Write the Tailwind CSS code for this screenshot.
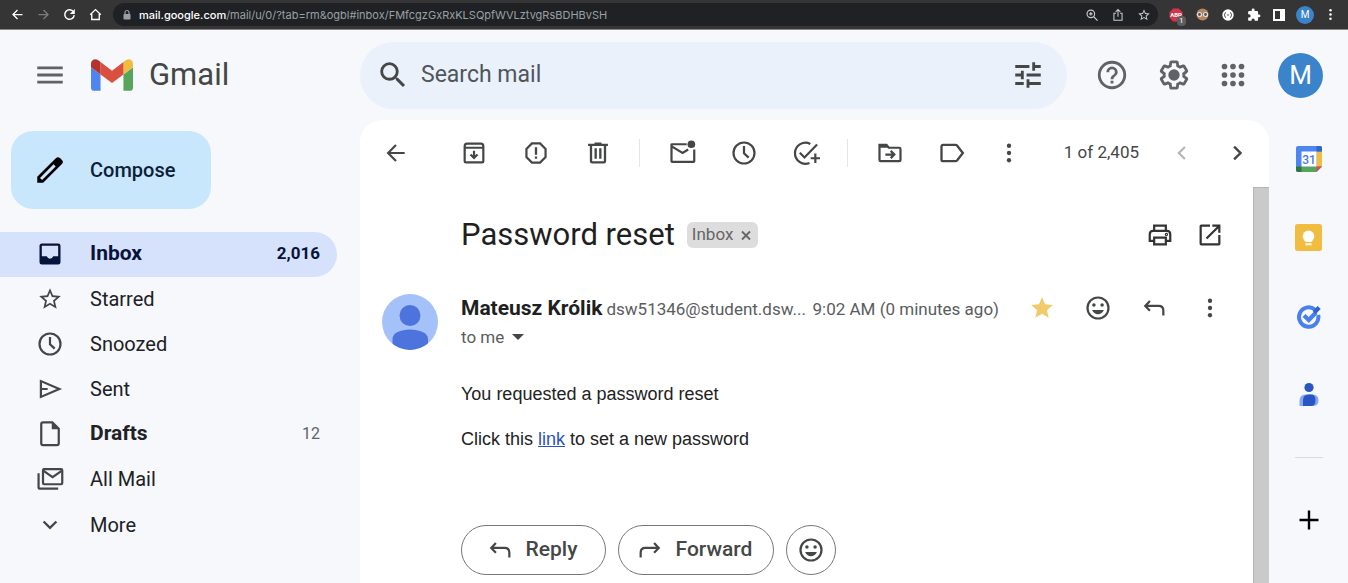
<!DOCTYPE html>
<html lang="en">
<head>
<meta charset="utf-8">
<meta name="viewport" content="width=device-width, initial-scale=1">
<title>Password reset - Gmail</title>
<script src="https://cdn.jsdelivr.net/npm/@tailwindcss/browser@4"></script>
</head>
<body class="flex min-h-screen flex-col bg-[#f6f8fc] font-[Roboto,sans-serif] text-[#1f1f1f]">

<!-- Shared icons -->
<svg class="hidden" aria-hidden="true">
  <symbol id="i-clock" viewBox="0 0 24 24"><circle cx="12" cy="12" r="9" fill="none" stroke="currentColor" stroke-width="1.900"/><path d="M12 6v6.200l4 3.800" fill="none" stroke="currentColor" stroke-width="1.900"/></symbol>
  <symbol id="i-dots" viewBox="0 0 24 24"><circle cx="12" cy="5.300" r="2" fill="currentColor"/><circle cx="12" cy="12" r="2" fill="currentColor"/><circle cx="12" cy="18.700" r="2" fill="currentColor"/></symbol>
  <symbol id="i-reply" viewBox="0 0 24 24"><path d="M8.500 6 4.500 10.200l4 4.200M4.500 10.200H16q4 0 4 4V18.500" fill="none" stroke="currentColor" stroke-width="1.900"/></symbol>
  <symbol id="i-smile" viewBox="0 0 24 24"><circle cx="12" cy="12" r="9" fill="none" stroke="currentColor" stroke-width="1.900"/><circle cx="8.500" cy="9.500" r="1.500" fill="currentColor"/><circle cx="15.500" cy="9.500" r="1.500" fill="currentColor"/><path d="M7 13.700h10c-.8 2.200-2.700 3.600-5 3.600s-4.200-1.400-5-3.600z" fill="currentColor"/></symbol>
  <symbol id="i-star" viewBox="0 0 24 24"><path d="m22 9.240-7.190-.62L12 2 9.190 8.630 2 9.240l5.460 4.730L5.820 21 12 17.270 18.180 21l-1.630-7.030L22 9.240zM12 15.400l-3.760 2.270 1-4.280-3.320-2.880 4.380-.38L12 6.100l1.710 4.040 4.380.38-3.320 2.880 1 4.280L12 15.400z" fill="currentColor"/></symbol>
  <symbol id="i-back" viewBox="0 0 24 24"><path d="M12 4.700 4.700 12l7.300 7.300M4.700 12H20" fill="none" stroke="currentColor" stroke-width="2"/></symbol>
</svg>

<!-- Browser toolbar -->
<div class="flex h-[30px] shrink-0 items-center border-b border-[#8a8486] bg-[#353535] pl-1 pr-[5px] text-white">
  <nav class="flex w-[109px] items-center" aria-label="Browser navigation">
    <button aria-label="Back" class="flex w-[26px] justify-center"><svg class="size-[15px]"><use href="#i-back"/></svg></button>
    <button aria-label="Forward" class="flex w-[26px] justify-center text-[#7d7e80]"><svg class="size-[15px] rotate-180"><use href="#i-back"/></svg></button>
    <button aria-label="Reload" class="flex w-[26px] justify-center"><svg class="size-[15px]" viewBox="0 0 24 24"><path d="M18.400 7.800A7.600 7.600 0 1 0 19.600 13" fill="none" stroke="currentColor" stroke-width="2.400"/><path d="M20.500 3v8h-8z" fill="currentColor"/></svg></button>
    <button aria-label="Home" class="flex w-[26px] justify-center"><svg class="size-[15px]" viewBox="0 0 24 24" fill="none" stroke="currentColor" stroke-width="2.200"><path d="M3.500 12.500 12 4.200l8.500 8.300M6 11v9h12v-9"/></svg></button>
  </nav>
  <div class="flex h-[23px] min-w-0 flex-1 items-center rounded-full bg-[#202124] pl-2 pr-px">
    <svg class="mr-[6px] size-3 shrink-0 text-[#9aa0a6]" viewBox="0 0 24 24"><rect x="5" y="10" width="14" height="11" rx="1.500" fill="currentColor"/><path d="M8 11V7a4 4 0 0 1 8 0v4" fill="none" stroke="currentColor" stroke-width="2.400"/></svg>
    <p class="min-w-0 flex-1 truncate font-[Inter,sans-serif] text-[11px] leading-4 text-[#9aa0a6]"><span class="font-medium text-white">mail.google.com</span>/mail/u/0/?tab=rm&amp;ogbl#inbox/FMfcgzGxRxKLSQpfWVLztvgRsBDHBvSH</p>
    <div class="flex text-[#c8cacc]">
      <button aria-label="Zoom" class="flex w-[26px] justify-center"><svg class="size-[14px]" viewBox="0 0 24 24" fill="none" stroke="currentColor" stroke-width="2"><circle cx="10" cy="10" r="6.500"/><path d="m15 15 6.500 6.500M10 7v6M7 10h6"/></svg></button>
      <button aria-label="Share" class="flex w-[26px] justify-center"><svg class="size-[14px]" viewBox="0 0 24 24" fill="none" stroke="currentColor" stroke-width="1.800"><path d="M8.500 9H5v12h14V9h-3.500M12 15V3M8 6.500 12 2.700l4 3.800"/></svg></button>
      <button aria-label="Bookmark" class="flex w-[26px] justify-center"><svg class="size-[14px]"><use href="#i-star"/></svg></button>
    </div>
  </div>
  <div class="flex items-center pl-[5px]">
    <button aria-label="ABP" class="relative flex w-[26px] justify-center"><svg class="size-[14px]" viewBox="0 0 14 14"><path d="M4.200.5h5.600l3.700 3.700v5.600l-3.700 3.700H4.200L.5 9.800V4.200z" fill="#d5344a"/><text x="7" y="9.300" font-family="Roboto" font-size="6" font-weight="700" fill="#fff" text-anchor="middle">ABP</text></svg><span class="absolute left-[14px] top-2 rounded-sm bg-[#5c5d60] px-[2px] text-[8px] leading-[10px]">1</span></button>
    <button aria-label="Glasses extension" class="flex w-[26px] justify-center"><svg class="size-[13px]" viewBox="0 0 13 13"><circle cx="6.500" cy="6.500" r="6" fill="#b98560"/><circle cx="3.500" cy="6.500" r="2" fill="#4d5055" stroke="#dfe5e6" stroke-width="1.200"/><circle cx="9.500" cy="6.500" r="2" fill="#4d5055" stroke="#dfe5e6" stroke-width="1.200"/></svg></button>
    <button aria-label="JSON extension" class="flex w-[26px] justify-center"><svg class="size-[12px]" viewBox="0 0 12 12"><circle cx="6" cy="6" r="5.700" fill="#fff"/><path d="M4 3.500Q2.500 3.700 2.900 5L2.300 6l.6 1Q2.500 8.300 4 8.500M8 3.500Q9.500 3.700 9.100 5l.6 1-.6 1Q9.500 8.300 8 8.500M5 6h2" fill="none" stroke="#353535" stroke-width=".8"/></svg></button>
    <button aria-label="Extensions" class="flex w-[25px] justify-center"><svg class="size-[14px]" viewBox="0 0 24 24"><path d="M20.500 11H19V7a2 2 0 0 0-2-2h-4V3.500a2.500 2.500 0 0 0-5 0V5H4a2 2 0 0 0-2 2v3.800h1.500a2.700 2.700 0 0 1 0 5.400H2V20a2 2 0 0 0 2 2h3.800v-1.500a2.700 2.700 0 0 1 5.400 0V22H17a2 2 0 0 0 2-2v-4h1.500a2.500 2.500 0 0 0 0-5z" fill="currentColor"/></svg></button>
    <button aria-label="Side panel" class="flex w-[26px] justify-center"><svg class="size-[12px]" viewBox="0 0 12 12"><path d="M0 0h12v12H0zM2 2v8h5V2z" fill="currentColor" fill-rule="evenodd"/></svg></button>
    <button aria-label="Profile" class="flex w-[26px] justify-center"><span class="flex size-[18px] items-center justify-center rounded-full bg-[#3b83ca] text-[10px]">M</span></button>
    <button aria-label="Browser menu" class="flex w-[25px] justify-center"><svg class="size-[15px]"><use href="#i-dots"/></svg></button>
  </div>
</div>

<!-- Gmail header -->
<header class="flex h-[90px] shrink-0 items-center pr-[25px] text-[#5f6368]">
  <div class="flex w-[360px] shrink-0 items-center pl-[33px]">
    <button aria-label="Main menu"><svg class="size-[34px]" viewBox="0 0 24 24"><path d="M3 18h18v-2H3v2zm0-5h18v-2H3v2zm0-7v2h18V6H3z" fill="currentColor"/></svg></button>
    <a href="#" class="ml-6 flex items-center gap-4 text-[#444746]">
      <svg class="h-8 w-[42px]" viewBox="52 42 88 66"><path fill="#4f85ee" d="M58 108h14V74L52 59v43c0 3.320 2.690 6 6 6"/><path fill="#57a55b" d="M120 108h14c3.320 0 6-2.690 6-6V59l-20 15"/><path fill="#f0bd41" d="M120 48v26l20-15v-8c0-7.420-8.470-11.650-14.400-7.200"/><path fill="#d9503f" d="M72 74V48l24 18 24-18v26L96 92"/><path fill="#b5332a" d="M52 51v8l20 15V48l-5.600-4.200c-5.940-4.450-14.400-.22-14.400 7.200"/></svg>
      <span class="text-[31px] leading-10">Gmail</span>
    </a>
  </div>
  <form role="search" class="flex h-[67px] w-[707px] min-w-0 flex-auto items-center rounded-full bg-[#eaf1fb] pl-4 pr-[22px] text-[#444746]">
    <button type="button" aria-label="Search"><svg class="size-[34px]" viewBox="0 0 24 24"><path fill="currentColor" d="M15.500 14h-.79l-.28-.27A6.470 6.470 0 0 0 16 9.500 6.500 6.500 0 1 0 9.500 16c1.610 0 3.090-.59 4.230-1.570l.27.28v.79l5 4.990L20.490 19l-4.990-5zm-6 0a4.500 4.500 0 1 1 0-9 4.500 4.500 0 0 1 0 9z"/></svg></button>
    <input type="text" aria-label="Search mail" placeholder="Search mail" class="ml-[11px] min-w-0 flex-1 bg-transparent text-[23px] leading-8 outline-none placeholder:text-[#50555a]">
    <button type="button" aria-label="Search options"><svg class="size-[34px]" viewBox="0 0 24 24"><path fill="currentColor" d="M3 17v2h6v-2H3zM3 5v2h10V5H3zm10 16v-2h8v-2h-8v-2h-2v6h2zM7 9v2H3v2h4v2h2V9H7zm14 4v-2H11v2h10zm-6-4h2V7h4V5h-4V3h-2v6z"/></svg></button>
  </form>
  <button aria-label="Support" class="ml-[14px] flex w-[62px] shrink-0 justify-center"><svg class="size-[34px]" viewBox="0 0 24 24"><path fill="currentColor" d="M11 18h2v-2h-2v2zm1-16a10 10 0 1 0 0 20 10 10 0 0 0 0-20zm0 18a8 8 0 1 1 0-16 8 8 0 0 1 0 16zm0-14a4 4 0 0 0-4 4h2a2 2 0 1 1 4 0c0 2-3 1.750-3 5h2c0-2.250 3-2.500 3-5a4 4 0 0 0-4-4z"/></svg></button>
  <button aria-label="Settings" class="flex w-[62px] shrink-0 justify-center"><svg class="size-[34px]" viewBox="0 0 24 24"><path fill="currentColor" d="M13.850 22.250h-3.700c-.74 0-1.360-.54-1.450-1.270l-.27-1.890c-.27-.14-.53-.29-.79-.46l-1.800.72c-.7.260-1.470-.03-1.810-.65L2.200 15.530c-.35-.66-.2-1.440.36-1.880l1.530-1.190c-.01-.15-.02-.3-.02-.46 0-.15.01-.31.020-.46l-1.520-1.190c-.59-.45-.74-1.260-.37-1.880l1.850-3.190c.34-.62 1.110-.9 1.790-.63l1.810.73c.26-.17.520-.32.780-.46l.27-1.910c.09-.7.710-1.250 1.440-1.250h3.700c.74 0 1.360.54 1.450 1.270l.27 1.890c.27.14.53.29.79.46l1.800-.72c.71-.26 1.480.03 1.820.65l1.840 3.180c.36.66.2 1.440-.36 1.880l-1.520 1.190c.01.15.020.3.020.46s-.01.31-.02.460l1.520 1.190c.56.45.72 1.230.37 1.860l-1.860 3.220c-.34.62-1.110.9-1.800.63l-1.800-.72c-.26.17-.52.32-.78.460l-.27 1.910c-.1.680-.72 1.220-1.460 1.220zm-3.230-2h2.760l.37-2.550.53-.22c.44-.18.88-.44 1.340-.78l.45-.34 2.380.96 1.380-2.400-2.030-1.580.07-.56c.03-.26.060-.51.060-.78s-.03-.53-.06-.78l-.07-.56 2.030-1.580-1.390-2.400-2.390.96-.45-.35c-.42-.32-.87-.58-1.330-.77l-.52-.22-.37-2.550h-2.760l-.37 2.550-.53.210c-.44.190-.88.440-1.340.790l-.45.330-2.380-.95-1.390 2.390 2.030 1.580-.07.560a7 7 0 0 0-.06.79c0 .26.020.53.060.78l.07.56-2.030 1.580 1.380 2.400 2.390-.96.450.35c.43.33.86.58 1.330.77l.53.22.38 2.550z"/><circle cx="12" cy="12" r="4" fill="currentColor"/></svg></button>
  <button aria-label="Google apps" class="flex w-14 shrink-0 justify-center"><svg class="size-[34px]" viewBox="0 0 24 24" fill="currentColor"><circle cx="6" cy="6" r="2"/><circle cx="12" cy="6" r="2"/><circle cx="18" cy="6" r="2"/><circle cx="6" cy="12" r="2"/><circle cx="12" cy="12" r="2"/><circle cx="18" cy="12" r="2"/><circle cx="6" cy="18" r="2"/><circle cx="12" cy="18" r="2"/><circle cx="18" cy="18" r="2"/></svg></button>
  <button aria-label="Account" class="ml-[17px] flex size-[45px] shrink-0 items-center justify-center rounded-full bg-[#3b83ca] text-[26px] text-white">M</button>
</header>

<div class="flex flex-1">
  <!-- Folders -->
  <aside class="w-[360px] shrink-0 pr-[23px] pt-[11px]">
    <button class="ml-[11px] flex h-[78px] w-[200px] items-center rounded-[22px] bg-[#c8e6fc] pl-[22px] text-[20px] font-medium text-[#0b1f38]">
      <svg class="mr-[23px] size-[34px] text-black" viewBox="0 0 24 24"><path fill="currentColor" d="M20.410 4.940 19.060 3.590a2.060 2.060 0 0 0-2.820 0L3 16.820V21h4.180L20.410 7.770a2 2 0 0 0 0-2.830zM6.410 19.060l-1.470-1.470 9.600-9.600 1.470 1.470-9.600 9.600z"/></svg>Compose
    </button>
    <nav class="mt-[23px] text-[20px] text-[#202124]" aria-label="Folders">
      <a href="#" aria-current="page" class="flex h-[45px] items-center rounded-r-full bg-[#d6e1fb] pb-0.5 pl-9 pr-[17px] text-[21px] font-bold text-[#06143c]"><svg class="mr-[26px] size-7" viewBox="0 0 24 24"><path fill="currentColor" fill-rule="evenodd" d="M5 3h14a2 2 0 0 1 2 2v14a2 2 0 0 1-2 2H5a2 2 0 0 1-2-2V5c0-1.100.9-2 2-2zm0 2v9h4.200q.8 2 2.800 2t2.800-2H19V5z"/></svg><span class="flex-1">Inbox</span><span class="text-[17px]">2,016</span></a>
      <a href="#" class="flex h-[45px] items-center pb-0.5 pl-9 pr-[17px]"><svg class="mr-[26px] size-7 p-px text-[#444746]"><use href="#i-star"/></svg>Starred</a>
      <a href="#" class="flex h-[45px] items-center pb-0.5 pl-9 pr-[17px]"><svg class="mr-[26px] size-7 text-[#444746]"><use href="#i-clock"/></svg>Snoozed</a>
      <a href="#" class="flex h-[45px] items-center pb-0.5 pl-9 pr-[17px]"><svg class="mr-[26px] size-7 text-[#444746]" viewBox="0 0 24 24" fill="none" stroke="currentColor" stroke-width="1.900"><path d="M4.200 5.200v13.600L20 12zM4.200 12H10"/></svg>Sent</a>
      <a href="#" class="flex h-[45px] items-center pb-0.5 pl-9 pr-[17px] text-[21px] font-bold"><svg class="mr-[26px] size-7 text-[#444746]" viewBox="0 0 24 24"><path d="M14 2H6Q4.500 2 4.500 3.500v16.500Q4.500 21.500 6 21.500h12q1.500 0 1.500-1.500V7.500z" fill="none" stroke="currentColor" stroke-width="1.900"/><path d="M13.500 2v6H20z" fill="currentColor"/></svg><span class="flex-1">Drafts</span><span class="text-[16px] font-normal text-[#5f6368]">12</span></a>
      <a href="#" class="flex h-[45px] items-center pb-0.5 pl-9 pr-[17px]"><svg class="mr-[26px] size-7 text-[#444746]" viewBox="0 0 24 24" fill="none" stroke="currentColor" stroke-width="1.900"><rect x="6" y="3.500" width="16.500" height="13" rx="1"/><path d="m6.500 5 7.700 5.500L22 5M2.200 7v12.500q0 .8.800.8h16"/></svg>All Mail</a>
      <a href="#" class="flex h-[45px] items-center pl-9 pr-[17px]"><svg class="mr-[26px] size-7 text-[#444746]" viewBox="0 0 24 24" fill="none" stroke="currentColor" stroke-width="2"><path d="m6.500 9 5.500 5.500L17.500 9"/></svg>More</a>
    </nav>
  </aside>

  <!-- Conversation -->
  <main class="flex min-w-0 flex-1 flex-col overflow-hidden rounded-t-[22px] bg-white">
    <div class="flex h-[67px] shrink-0 items-center pb-0.5 pl-[5px] pr-1 text-[#444746]">
      <button aria-label="Back to Inbox" class="mr-4 flex w-[62px] justify-center"><svg class="size-[26px]"><use href="#i-back"/></svg></button>
      <button aria-label="Archive" class="flex w-[62px] justify-center"><svg class="size-7" viewBox="0 0 24 24" fill="none" stroke="currentColor" stroke-width="1.900"><path d="M4 6.500Q4 4 6 4h12q2 0 2 2.500V19q0 1-1 1H5q-1 0-1-1zM4 7.500h16M12 10v6M9 13.300l3 3 3-3"/></svg></button>
      <button aria-label="Report spam" class="flex w-[62px] justify-center"><svg class="size-7" viewBox="0 0 24 24"><path d="M8.500 3.800h7l4.700 4.700v7l-4.700 4.700h-7l-4.700-4.700v-7z" fill="none" stroke="currentColor" stroke-width="1.900"/><path d="M11 7h2v6.500h-2zM11 15h2v2h-2z" fill="currentColor"/></svg></button>
      <button aria-label="Delete" class="flex w-[62px] justify-center"><svg class="size-7" viewBox="0 0 24 24" fill="none" stroke="currentColor" stroke-width="2"><path d="M3.500 5h17M9 4h6M6 5v14q0 1 1 1h10q1 0 1-1V5M10 8v9M14 8v9"/></svg></button>
      <span class="ml-[10px] mr-[11px] h-7 w-px bg-[#e3e5e8]"></span>
      <button aria-label="Mark as unread" class="flex w-[62px] justify-center"><svg class="size-7" viewBox="0 0 24 24"><path d="M16 4.500H3.500Q3 4.500 3 5v14q0 .6.600.6H21.900q.6 0 .6-.6V9M3.500 6.500 12.500 12l4.800-3" fill="none" stroke="currentColor" stroke-width="1.900"/><circle cx="20" cy="4.500" r="3.300" fill="currentColor"/></svg></button>
      <button aria-label="Snooze" class="flex w-[62px] justify-center"><svg class="size-7"><use href="#i-clock"/></svg></button>
      <button aria-label="Add to Tasks" class="flex w-[62px] justify-center"><svg class="size-7" viewBox="0 0 24 24" fill="none" stroke="currentColor" stroke-width="1.900"><path d="M15.700 4.200A9 9 0 1 0 15 20.500M6.700 11.800l4 4L21.500 4.700M20 12.500v8M16 16.500h8"/></svg></button>
      <span class="ml-[10px] mr-[11px] h-7 w-px bg-[#e3e5e8]"></span>
      <button aria-label="Move to" class="flex w-[62px] justify-center"><svg class="size-7" viewBox="0 0 24 24"><path d="M3 5h6l2 2.500h9q1 0 1 1V18q0 1-1 1H4q-1 0-1-1z" fill="none" stroke="currentColor" stroke-width="1.900"/><path d="M2.500 4.500H9l2.500 3h-9z" fill="currentColor"/><path d="M8 13.300h7.500M12.600 10.200l3.100 3.100-3.100 3.100" fill="none" stroke="currentColor" stroke-width="1.900"/></svg></button>
      <button aria-label="Labels" class="flex w-[62px] justify-center"><svg class="size-7" viewBox="0 0 24 24" fill="none" stroke="currentColor" stroke-width="2"><path d="M4.500 5H15q.8 0 1.300.6L21.300 12l-5 6.400q-.5.600-1.300.6H4.500Q3 19 3 17.500v-11Q3 5 4.500 5z"/></svg></button>
      <button aria-label="More" class="flex w-[52px] justify-center"><svg class="size-7 p-px"><use href="#i-dots"/></svg></button>
      <span class="ml-auto mr-4 whitespace-nowrap text-[17px]">1 of 2,405</span>
      <button aria-label="Newer" disabled class="flex w-[54px] justify-center text-[#b4b6b8]"><svg class="size-7" viewBox="0 0 24 24" fill="none" stroke="currentColor" stroke-width="1.900"><path d="M14.500 6.800 9.300 12l5.200 5.200"/></svg></button>
      <button aria-label="Older" class="flex w-14 justify-center"><svg class="size-7" viewBox="0 0 24 24" fill="none" stroke="currentColor" stroke-width="2.100"><path d="M9.500 6.500 15 12l-5.500 5.500"/></svg></button>
    </div>

    <div class="flex flex-1">
      <div class="min-w-0 flex-1 pb-2 pl-[22px] pr-[15px]">
        <div class="flex h-24 items-center pl-[79px] pr-[3px] text-[#333]">
          <h1 class="mr-3 whitespace-nowrap text-[31px] leading-10 text-[#1f1f1f]">Password reset</h1>
          <div class="flex h-[26px] items-center gap-[6px] rounded-md bg-[#dddddd] px-[5px] text-[17px] text-[#666]">Inbox <button aria-label="Remove label Inbox"><svg class="size-[14px]" viewBox="0 0 14 14" stroke="currentColor" stroke-width="1.800"><path d="m3 3.500 8 8M11 3.500l-8 8"/></svg></button></div>
          <button aria-label="Print" class="ml-auto flex w-[50px] justify-center"><svg class="size-7" viewBox="0 0 24 24" fill="none" stroke="currentColor" stroke-width="1.900"><path d="M7 8.500V4h10v4.500M7 17H3.200v-5.500q0-3 2.800-3h12q2.800 0 2.800 3V17H17"/><path d="M7 14.200h10V20H7z"/><circle cx="17.500" cy="11.500" r=".5"/></svg></button>
          <button aria-label="Open in new window" class="flex w-[50px] justify-center"><svg class="size-7" viewBox="0 0 24 24" fill="none" stroke="currentColor" stroke-width="1.900"><path d="M12 4H4.500Q4 4 4 4.500v15q0 .5.500.5h15q.5 0 .5-.5V12M14 4h6v6M20 4 9 15"/></svg></button>
        </div>

        <article>
          <div class="mt-[11px] flex items-start">
            <svg class="mr-[23px] size-14 shrink-0 rounded-full" viewBox="0 0 56 56" role="img" aria-label="Mateusz Królik"><path fill="#a5c1fa" d="M0 0h56v56H0z"/><circle cx="28" cy="21.500" r="10.500" fill="#4c74dc"/><path d="M10.500 56V45c0-6 8-9.500 17.500-9.500S46 39 46 45v11z" fill="#4c74dc"/></svg>
            <div class="min-w-0 flex-1 text-[17px] leading-7 text-[#5a5d60]">
              <div class="flex items-baseline whitespace-nowrap"><h2 class="mr-1 text-[21px] font-bold text-[#1f1f1f]">Mateusz Królik</h2><span>dsw51346@student.dsw...</span><time class="ml-auto">9:02 AM (0 minutes ago)</time></div>
              <button class="flex items-center gap-2">to me <svg class="h-[6px] w-3" viewBox="0 0 12 6"><path d="M0 0h12L6 6z" fill="#444746"/></svg></button>
            </div>
            <div class="ml-[15px] flex h-7 shrink-0 items-center text-[#444746]">
              <button aria-label="Starred" class="flex w-14 justify-center text-[#f2ca6c]"><svg class="size-[26px]" viewBox="0 0 24 24"><path d="M12 17.270 18.180 21l-1.640-7.030L22 9.240l-7.190-.61L12 2 9.190 8.630 2 9.240l5.460 4.730L5.820 21z" fill="currentColor"/></svg></button>
              <button aria-label="Add reaction" class="flex w-14 justify-center"><svg class="size-7"><use href="#i-smile"/></svg></button>
              <button aria-label="Reply" class="flex w-14 justify-center"><svg class="size-7"><use href="#i-reply"/></svg></button>
              <button aria-label="More" class="flex w-14 justify-center"><svg class="size-7 p-px"><use href="#i-dots"/></svg></button>
            </div>
          </div>

          <div class="pl-[79px]">
            <div class="mt-[31px] space-y-[21px] font-['Liberation_Sans',Arial,sans-serif] text-[18px] leading-6 text-[#222]">
              <p>You requested a password reset</p>
              <p>Click this <a href="#" class="text-[#2a52be] underline">link</a> to set a new password</p>
            </div>
            <div class="mt-[74px] flex gap-3 text-[21px] font-medium text-[#444746]">
              <button class="flex h-[50px] w-[145px] items-center justify-center gap-3 rounded-full border border-[#747775] pr-1"><svg class="size-7"><use href="#i-reply"/></svg>Reply</button>
              <button class="flex h-[50px] w-[156px] items-center justify-center gap-3 rounded-full border border-[#747775] pr-1"><svg class="size-7 -scale-x-100"><use href="#i-reply"/></svg>Forward</button>
              <button aria-label="Add reaction" class="flex size-[50px] items-center justify-center rounded-full border border-[#747775]"><svg class="size-[28px]"><use href="#i-smile"/></svg></button>
            </div>
          </div>
        </article>
      </div>
      <div class="w-4 shrink-0 border-l border-t border-[#b5b5b5] bg-[#cacaca]"></div>
    </div>
  </main>

  <!-- Side panel -->
  <aside class="flex w-[79px] shrink-0 flex-col items-center" aria-label="Side panel">
    <button aria-label="Calendar" class="flex h-[78px] items-center"><svg class="size-[26px]" viewBox="0 0 26 26"><path d="M0 2Q0 0 2 0h22q2 0 2 2v18.500L20.500 26H2q-2 0-2-2z" fill="#4f85ee"/><path d="M20.500 5.500H26v15h-5.500z" fill="#f0bd41"/><path d="M20.500 5.500V0H24q2 0 2 2v3.500z" fill="#3166d0"/><path d="M5.500 20.500h15V26h-15z" fill="#57a55b"/><path d="M0 20.500h5.500V26H2q-2 0-2-2z" fill="#2c7a41"/><path d="M20.500 20.500H26L20.500 26z" fill="#d9503f"/><path d="M5.500 5.500h15v15h-15z" fill="#fff"/><text x="13" y="17.500" font-family="Roboto" font-size="12" font-weight="500" fill="#4479e3" text-anchor="middle">31</text></svg></button>
    <button aria-label="Keep" class="flex h-[79px] items-center"><svg class="size-[27px]" viewBox="0 0 27 27"><rect width="27" height="27" rx="2.500" fill="#f0bd41"/><circle cx="13.500" cy="12.300" r="5.800" fill="#fff"/><path d="M10.500 15h6v3h-6zM10.500 19.200h6v2h-6z" fill="#fff"/></svg></button>
    <button aria-label="Tasks" class="flex h-[79px] items-center"><svg class="size-[26px]" viewBox="0 0 26 26" fill="none"><path d="M18.800 5.500A9.700 9.700 0 1 0 22.200 11" stroke="#4a80ed" stroke-width="4"/><path d="m8 11.500 4.800 4.500L20 8.500" stroke="#4a80ed" stroke-width="4.200"/><path d="m18.200 8.600 5-5" stroke="#2f62cd" stroke-width="4.200"/></svg></button>
    <button aria-label="Contacts" class="flex h-[78px] items-center"><svg class="size-[26px]" viewBox="0 0 26 26"><path d="M3.500 24v-5q0-6.500 6-6.500h7q6 0 6 6 0 5.500-6 5.500z" fill="#86a6f6"/><path d="M7 24v-5.500q0-6 5.500-6h2.500q4.500 0 4.500 5.500 0 6-4.500 6z" fill="#2857c4"/><circle cx="13" cy="5.500" r="4.600" fill="#2857c4"/></svg></button>
    <div class="mt-[23px] h-px w-7 bg-[#d9dbdf]"></div>
    <button aria-label="Get add-ons" class="mt-[49px]"><svg class="size-[26px] text-black" viewBox="0 0 26 26" stroke="currentColor" stroke-width="2.400"><path d="M13 3.500v19M3.500 13h19"/></svg></button>
  </aside>
</div>
</body>
</html>
